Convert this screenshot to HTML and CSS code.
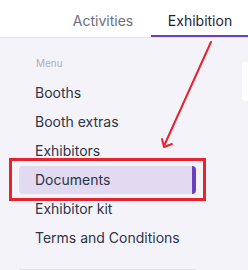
FILE: index.html
```html
<!DOCTYPE html>
<html lang="en">
<head>
    <meta charset="UTF-8">
    <title>Exhibition</title>
    <link rel="stylesheet" href="styles.css">
</head>
<body>
    <header class="topbar">
        <nav class="tabs">
            <a class="tab">Activities</a>
            <a class="tab active">Exhibition</a>
        </nav>
    </header>

    <div class="layout">
        <aside class="sidebar">
            <div class="menu-label">Menu</div>
            <ul class="menu">
                <li>Booths</li>
                <li>Booth extras</li>
                <li>Exhibitors</li>
                <li class="current">Documents</li>
                <li>Exhibitor kit</li>
                <li>Terms and Conditions</li>
            </ul>
            <div class="sidebar-footer"></div>
        </aside>
        <main class="content">
            <div class="panel"></div>
        </main>
    </div>

    <!-- annotation -->
    <div class="highlight-box"></div>
    <svg class="arrow" width="248" height="270" viewBox="0 0 248 270">
        <line x1="211" y1="42" x2="164" y2="146" stroke="#e8232f" stroke-width="2" stroke-linecap="round"/>
        <polyline points="162,139 164,147 172,144" fill="none" stroke="#e8232f" stroke-width="2" stroke-linecap="round" stroke-linejoin="round"/>
    </svg>
</body>
</html>
```

FILE: styles.css
```css
body {
    margin: 0;
    width: 248px;
    height: 270px;
    overflow: hidden;
    font-family: Inter, "Noto Sans", sans-serif;
    background: #f5f3fa;
    color: #2d3446;
    position: relative;
}

.topbar {
    height: 37px;
    background: #ffffff;
    border-bottom: 1px solid #e6e3ec;
    box-sizing: content-box;
}

.tabs {
    display: flex;
    justify-content: flex-end;
    height: 100%;
}

.tab {
    width: 98px;
    box-sizing: border-box;
    display: flex;
    align-items: center;
    justify-content: center;
    padding-top: 6px;
    font-size: 14px;
    color: #6b6f7c;
    border-bottom: 2px solid transparent;
    margin-right: -1px;
}

.tab.active {
    color: #1f2433;
    border-bottom-color: #6a3fc4;
}

.layout {
    display: flex;
}

.sidebar {
    width: 177px;
    margin-left: 19px;
    padding-top: 19px;
    display: flex;
    flex-direction: column;
}

.menu-label {
    font-size: 10px;
    color: #b1aebb;
    padding-left: 17px;
    margin-bottom: 10px;
}

.menu {
    list-style: none;
    margin: 0;
    padding: 0;
    display: flex;
    flex-direction: column;
    gap: 1px;
}

.menu li {
    height: 28px;
    line-height: 28px;
    padding-left: 16px;
    font-size: 14px;
    border-radius: 4px;
}

.menu li.current {
    background: #e1daf0;
    border-right: 4px solid #6a3fc4;
}

.sidebar-footer {
    margin-top: 17px;
    border-top: 1px solid #e2dfe8;
}

.content {
    flex: 1;
    padding-left: 46px;
    padding-top: 24px;
}

.panel {
    height: 39px;
    background: #ffffff;
    border-radius: 4px 0 0 4px;
}

.highlight-box {
    position: absolute;
    left: 9px;
    top: 158px;
    width: 191px;
    height: 37px;
    border: 3px solid #e8232f;
}

.arrow {
    position: absolute;
    left: 0;
    top: 0;
}
```
